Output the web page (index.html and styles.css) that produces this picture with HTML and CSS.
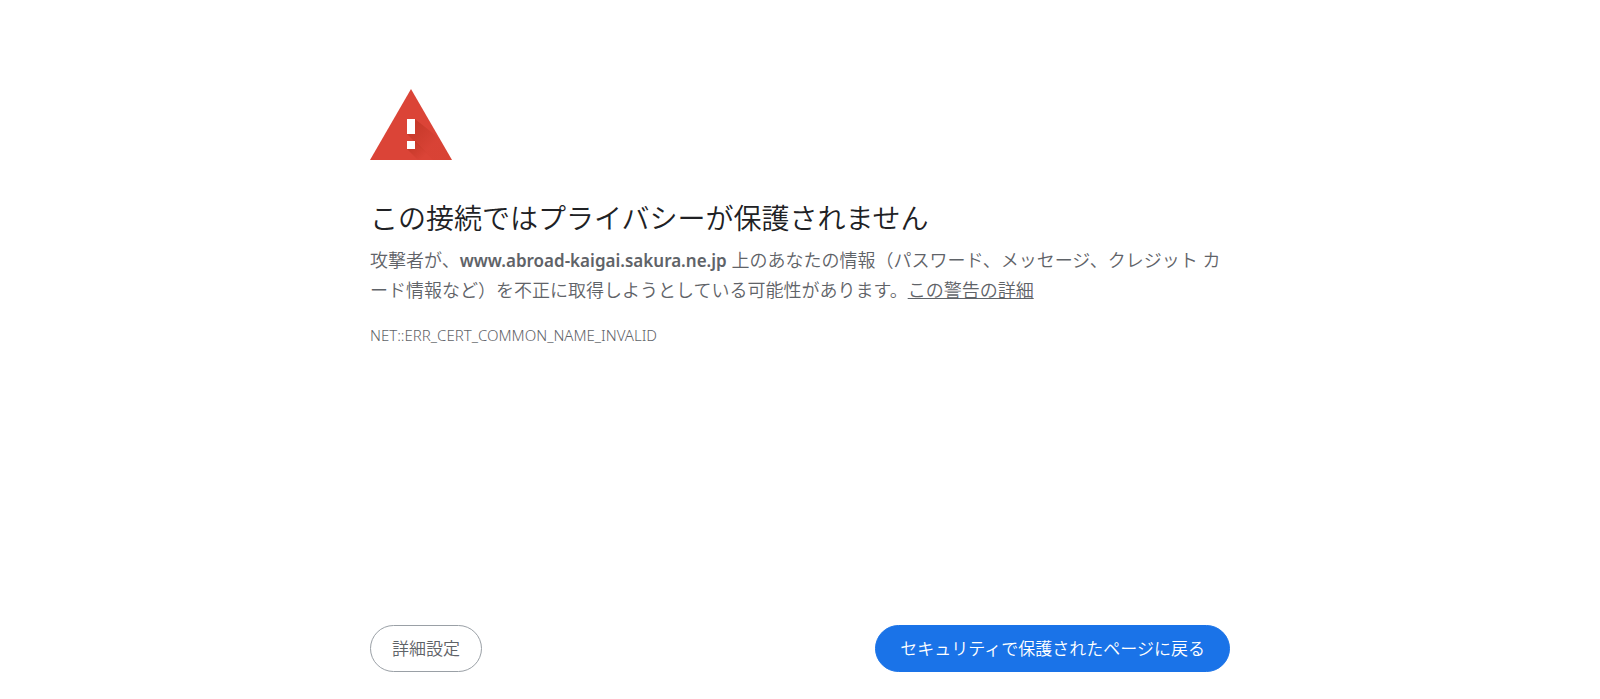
FILE: index.html
```html
<!DOCTYPE html>
<html lang="ja">

<head>
    <meta charset="UTF-8">
    <meta name="viewport" content="width=device-width, initial-scale=1.0">
    <title>プライバシー エラー</title>
    <link rel="stylesheet" href="styles.css">
</head>

<body>
    <main class="interstitial">
        <svg class="icon" viewBox="0 0 82 71" aria-hidden="true">
            <defs>
                <linearGradient id="shadow" gradientUnits="userSpaceOnUse" x1="40" y1="38" x2="60" y2="58">
                    <stop offset="0" stop-color="#a52714" stop-opacity="0.4" />
                    <stop offset="1" stop-color="#a52714" stop-opacity="0.05" />
                </linearGradient>
                <linearGradient id="shadow-dot" gradientUnits="userSpaceOnUse" x1="40" y1="56" x2="53" y2="69">
                    <stop offset="0" stop-color="#a52714" stop-opacity="0.4" />
                    <stop offset="1" stop-color="#a52714" stop-opacity="0" />
                </linearGradient>
            </defs>
            <path d="M41 0L82 71H0z" fill="#db4437" />
            <!-- 感嘆符の影 -->
            <path d="M45 30L70 50L82 71H63L37 45z" fill="url(#shadow)" />
            <path d="M45 52L64 71H48L37 60z" fill="url(#shadow-dot)" />
            <path d="M37 30h8v15h-8zM37 52h8v8h-8z" fill="#fff" />
        </svg>

        <h1 class="title">この接続ではプライバシーが保護されません</h1>
        <p class="message">攻撃者が、<strong>www.abroad-kaigai.sakura.ne.jp</strong> 上のあなたの情報（パスワード、メッセージ、クレジット カード情報など）を不正に取得しようとしている可能性があります。<a class="learn-more" href="#">この警告の詳細</a></p>
        <div class="error-code">NET::ERR_CERT_COMMON_NAME_INVALID</div>

        <div class="buttons">
            <button class="button secondary" type="button">詳細設定</button>
            <button class="button primary" type="button">セキュリティで保護されたページに戻る</button>
        </div>
    </main>
</body>

</html>
```
FILE: styles.css
```css
* {
    margin: 0;
    padding: 0;
    box-sizing: border-box;
}

body {
    font-family: "Noto Sans", "Noto Sans CJK JP", sans-serif;
    font-weight: 350;
    color: #5f6368;
    background-color: #fff;
}

.interstitial {
    display: flex;
    flex-direction: column;
    width: 100%;
    max-width: 900px;
    min-height: 100vh;
    margin: 0 auto;
    padding: 89px 20px 27px;
}

.icon {
    width: 82px;
    height: 71px;
    margin-bottom: 40px;
}

.title {
    font-size: 28px;
    font-weight: 350;
    line-height: 36px;
    color: #202124;
    margin-bottom: 9px;
}

.message {
    font-size: 18px;
    line-height: 30px;
    line-break: loose;
    margin-bottom: 20px;
}

.message strong {
    font-size: 17px;
    font-weight: 600;
    line-height: 24px;
}

.learn-more {
    color: inherit;
    text-decoration: underline;
}

.error-code {
    font-size: 15px;
    font-weight: 300;
    line-height: 20px;
}

.buttons {
    display: flex;
    flex-wrap: wrap;
    justify-content: space-between;
    gap: 12px;
    margin-top: auto;
}

.button {
    font-family: inherit;
    font-size: 17px;
    font-weight: 350;
    line-height: 24px;
    height: 47px;
    border: 1px solid #9aa0a6;
    border-radius: 24px;
    cursor: pointer;
}

.secondary {
    padding: 0 21px;
    color: #5f6368;
    background-color: #fff;
}

.primary {
    padding: 0 24px;
    color: #fff;
    background-color: #1a73e8;
    border-color: #1a73e8;
}
```
